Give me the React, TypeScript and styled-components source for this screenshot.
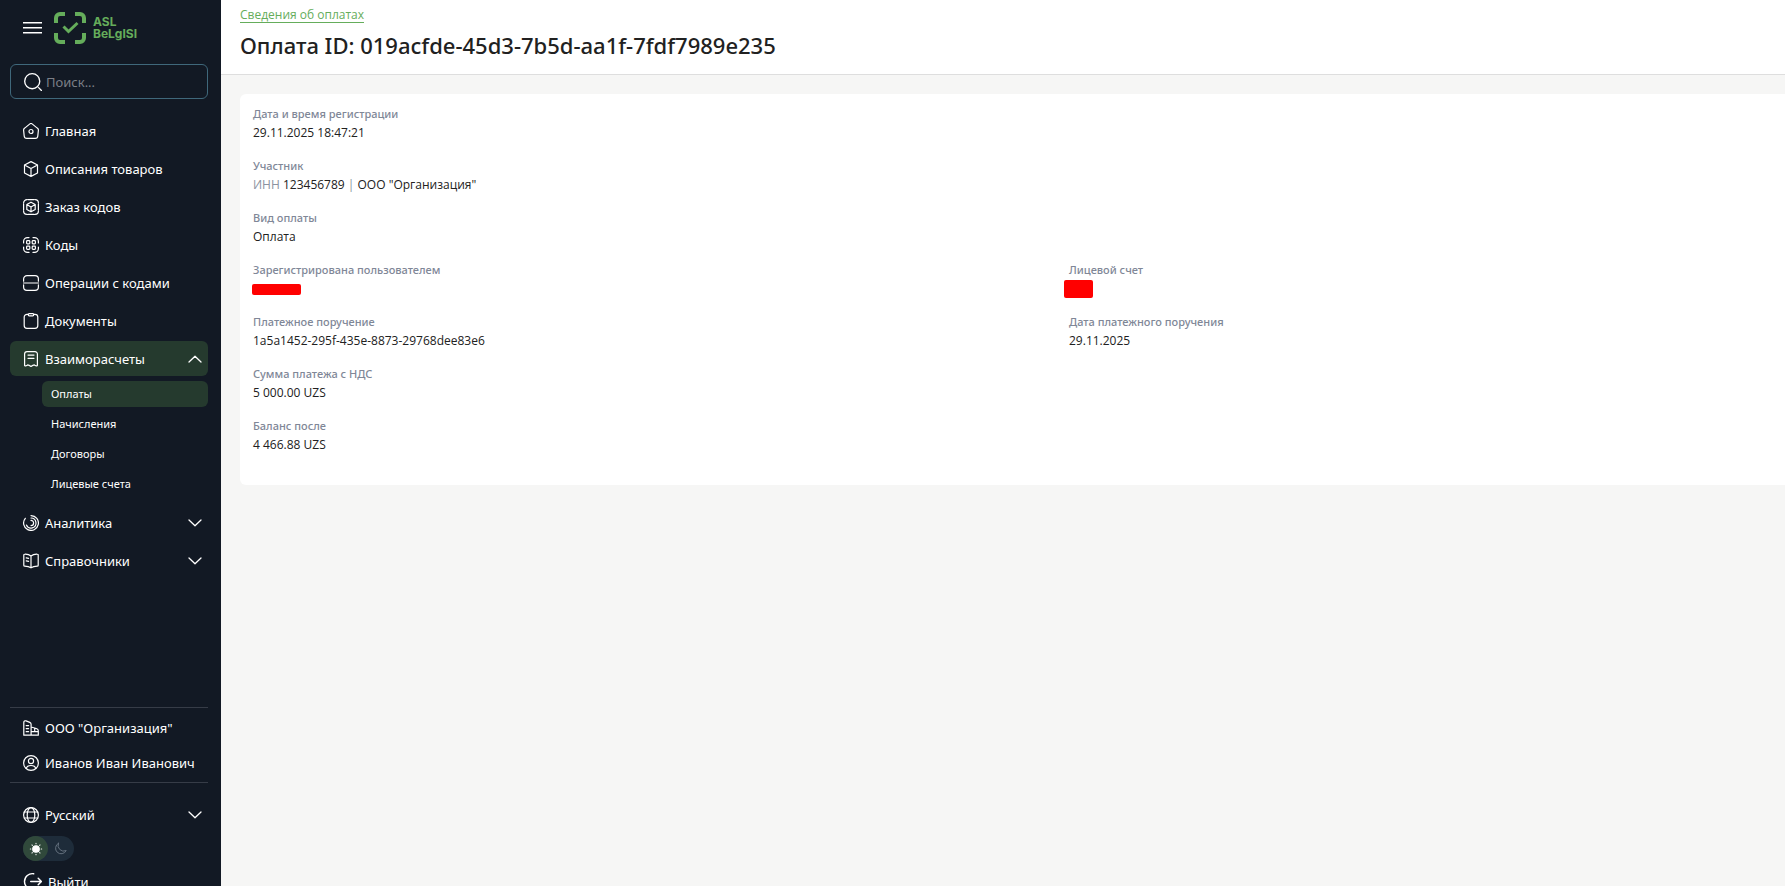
import React from "react";
import styled, { createGlobalStyle } from "styled-components";

const GlobalStyle = createGlobalStyle`
  * { box-sizing: border-box; }
  body {
    margin: 0;
    background: #f6f6f5;
    color: #212121;
    font-family: "Open Sans", "Noto Sans", sans-serif;
    font-size: 12px;
  }
  button, input { font: inherit; color: inherit; }
`;

const Page = styled.div`
  display: grid;
  grid-template-columns: 221px minmax(0, 1fr);
  min-height: 100vh;
`;

const Sidebar = styled.aside`
  position: sticky;
  top: 0;
  height: 100vh;
  overflow: hidden;
  display: flex;
  flex-direction: column;
  padding: 12px 13px 0 10px;
  background: #121924;
  color: #fff;
  font-family: "Noto Sans", "Open Sans", sans-serif;
  font-size: 13px;
`;

const Brand = styled.div`
  display: flex;
  align-items: center;
  gap: 12px;
  height: 32px;
  padding-left: 13px;
  flex-shrink: 0;
`;

const IconButton = styled.button`
  display: flex;
  padding: 0;
  border: 0;
  background: none;
  cursor: pointer;
`;

const Logo = styled.a`
  display: flex;
  align-items: center;
  gap: 7px;
  color: #65ad5b;
  text-decoration: none;
`;

const LogoText = styled.span`
  font: 700 12px/12px Inter, sans-serif;
`;

const LogoLine = styled.span`
  display: block;
`;

const SearchBox = styled.label`
  display: flex;
  align-items: center;
  gap: 4px;
  height: 35px;
  flex-shrink: 0;
  margin: 20px 0 14px;
  padding: 0 13px;
  border: 1px solid #3f687b;
  border-radius: 6px;
`;

const SearchInput = styled.input`
  flex: 1;
  min-width: 0;
  padding: 0;
  border: 0;
  outline: 0;
  background: none;
  &::placeholder { color: #7b7f87; opacity: 1; }
`;

const Nav = styled.nav`
  flex: 1 0 auto;
  display: flex;
  flex-direction: column;
  gap: 3px;
  padding-bottom: 129px;
`;

const Item = styled.button<{ $active?: boolean }>`
  display: flex;
  align-items: center;
  gap: 6px;
  width: 100%;
  height: 35px;
  flex-shrink: 0;
  padding: 0 6px 0 13px;
  border: 0;
  border-radius: 6px;
  background: ${(p) => (p.$active ? "#253a2e" : "none")};
  text-align: left;
  white-space: nowrap;
  cursor: pointer;
`;

const ItemText = styled.span`
  flex: 1;
`;

const SubMenu = styled.div`
  display: flex;
  flex-direction: column;
  gap: 4px;
  padding: 2px 0 5px 32px;
`;

const SubLink = styled.a<{ $active?: boolean }>`
  padding: 0 9px;
  border-radius: 6px;
  background: ${(p) => (p.$active ? "#253a2e" : "none")};
  color: inherit;
  font-size: 11px;
  line-height: 26px;
  text-decoration: none;
`;

const Account = styled.div`
  flex-shrink: 0;
  padding: 2px 0;
  border: solid #363c47;
  border-width: 1px 0;
`;

const Settings = styled.div`
  flex-shrink: 0;
  padding-top: 14px;
`;

const ThemeSwitch = styled.button`
  display: flex;
  align-items: center;
  width: 51px;
  height: 25px;
  margin: 4px 0 3px 13px;
  padding: 0;
  border: 0;
  border-radius: 13px;
  background: #1e2c3a;
  cursor: pointer;
`;

const ThemeOption = styled.span<{ $on?: boolean }>`
  display: grid;
  place-items: center;
  width: 25px;
  height: 25px;
  border-radius: 50%;
  background: ${(p) => (p.$on ? "#30493b" : "none")};
  color: ${(p) => (p.$on ? "#fff" : "#66727f")};
`;

const Main = styled.main`
  display: flex;
  flex-direction: column;
`;

const Header = styled.header`
  padding: 7px 19px 14px;
  border-bottom: 1px solid #dedede;
  background: #fff;
`;

const Crumb = styled.a`
  display: block;
  width: fit-content;
  border-bottom: 1px solid #65ad5b;
  color: #65ad5b;
  line-height: 15px;
  text-decoration: none;
`;

const Title = styled.h1`
  margin: 7px 0 0;
  font-family: "Noto Sans", "Open Sans", sans-serif;
  font-size: 22px;
  font-weight: 500;
  line-height: 30px;
`;

const Card = styled.section`
  margin: 19px 0 0 19px;
  padding: 11px 2px 30px 13px;
  border-radius: 6px 0 0 6px;
  background: #fff;
`;

const Fields = styled.dl`
  display: grid;
  grid-template-columns: 8fr 7fr;
  row-gap: 14px;
  margin: 0;
`;

const Field = styled.div<{ $wide?: boolean }>`
  grid-column: ${(p) => (p.$wide ? "1 / -1" : "auto")};
`;

const Label = styled.dt`
  color: #808797;
  font-family: "Noto Sans", "Open Sans", sans-serif;
  font-size: 11px;
  font-weight: 500;
  line-height: 18px;
`;

const Value = styled.dd`
  margin: 0;
  height: 20px;
  line-height: 20px;
`;

const Muted = styled.span`
  color: #8b92a0;
`;

const Redaction = styled.span<{ $tall?: boolean }>`
  display: block;
  width: ${(p) => (p.$tall ? 29 : 49)}px;
  height: ${(p) => (p.$tall ? 18 : 11)}px;
  margin-left: ${(p) => (p.$tall ? -5 : -1)}px;
  border-radius: 2px;
  background: #f00;
`;

const RedactedValue = styled(Value)`
  display: flex;
  align-items: center;
`;

function Icon({ children, size = 16, width = 1.2 }: { children: React.ReactNode; size?: number; width?: number }) {
  return (
    <svg width={size} height={size} viewBox="0 0 16 16" fill="none" stroke="currentColor" strokeWidth={width} strokeLinecap="round" strokeLinejoin="round" aria-hidden="true">
      {children}
    </svg>
  );
}

const Chevron = ({ up }: { up?: boolean }) => (
  <svg width="14" height="8" viewBox="0 0 14 8" fill="none" stroke="currentColor" strokeWidth="1.3" strokeLinecap="round" strokeLinejoin="round" aria-hidden="true">
    <path d={up ? "M1 7 7 1.2 13 7" : "M1 1 7 6.8 13 1"} />
  </svg>
);

const home = <><path d="M6.9.9a1.8 1.8 0 0 1 2.2 0l5.2 4.2c.8.6 1.2 1.3 1.1 2.2l-.6 5.700a2.600 2.600 0 0 1-2.600 2.400H3.800a2.600 2.600 0 0 1-2.600-2.400L.6 7.300c-.1-.9.3-1.600 1.100-2.200z" /><circle cx="8" cy="8.500" r="2" /></>;
const box = <path d="M8 .6 14.500 4v8L8 15.400 1.500 12V4zM1.500 4 8 7.600 14.500 4M8 7.600v7.800" />;
const order = <><path d="M5 .6h6M5 15.400h6M.6 5v6M15.400 5v6M.6 4A3.400 3.400 0 0 1 4 .6M12 .6A3.400 3.400 0 0 1 15.400 4M.6 12A3.400 3.400 0 0 0 4 15.400M12 15.400a3.400 3.400 0 0 0 3.400-3.400" /><path d="m8 3.200 4.200 2.400v4.800L8 12.800l-4.200-2.400V5.600zM3.800 5.600 8 8l4.200-2.400M8 8v4.800" /></>;
const codes = <><rect x="3.600" y="3.600" width="3.200" height="3.200" rx=".8" /><rect x="9.200" y="3.600" width="3.200" height="3.200" rx=".8" /><rect x="3.600" y="9.200" width="3.200" height="3.200" rx=".8" /><rect x="9.200" y="9.200" width="3.200" height="3.200" rx=".8" /><path d="M.6 6V4.500A3.900 3.900 0 0 1 4.500.6H6M10 .6h1.500a3.900 3.900 0 0 1 3.900 3.900V6M.6 10v1.500a3.900 3.900 0 0 0 3.900 3.900H6M10 15.400h1.500a3.900 3.900 0 0 0 3.900-3.900V10" /></>;
const operations = <><path d="M.6 6.200V4A3.400 3.400 0 0 1 4 .6h8A3.400 3.400 0 0 1 15.400 4v2.200M.6 9.800V12A3.400 3.400 0 0 0 4 15.400h8a3.400 3.400 0 0 0 3.400-3.400V9.800" /><path d="M.4 8h15.200" /></>;
const documents = <><path d="M5.200 1.300H4A2.800 2.800 0 0 0 1.200 4.100v8.500A2.800 2.800 0 0 0 4 15.400h8a2.800 2.800 0 0 0 2.800-2.800V4.100A2.800 2.800 0 0 0 12 1.300h-1.200" /><path d="M5.200 1.600c0-.6.400-1 1-1h3.600c.6 0 1 .4 1 1s-.4 1.300-1 1.300H6.200c-.6 0-1-.7-1-1.300z" /></>;
const receipt = <><path d="M1.600 14.600V3A2.400 2.400 0 0 1 4 .6h8A2.400 2.400 0 0 1 14.400 3v11.600c-1.600.5-2.400.1-3.100-.7-1.100.1-1.900.500-3.300 1.500-1.400-1-2.200-1.400-3.300-1.500-.7.800-1.500 1.200-3.100.7z" /><path d="M5 4.100h6M5 7.300h6" /></>;
const analytics = <><path d="M8 .6A7.400 7.400 0 1 1 2.300 3.300" /><path d="M8 3a5 5 0 1 1-4.600 7" /><path d="M8 5.400a2.600 2.600 0 0 1 0 5.200" /></>;
const book = <><path d="M8 3C6.400 1.600 3.600 1 1.700 1.100 1.100 1.100.8 1.500.8 2v10.200c0 .6.400 1 .9 1 2.300 0 4.500.4 6.300 1.600 1.800-1.200 4-1.600 6.300-1.600.5 0 .9-.4.9-1V2c0-.5-.3-.9-.9-.9C12.400 1 9.600 1.600 8 3zM8 3v11.800M3.200 4.800l2.400.5M3.200 7.800l2.400.5" /></>;
const company = <><path d="M.8 15.200V2.600C.8 1 1.800.5 3 .9l3.800 1.500c.9.400 1.300.9 1.300 1.900v10.900zM8.100 7l5.200 1.500c1.400.5 2 1 2 2.200v4.500H8.100M3.200 5.600h2.400M3.200 8.600h2.400M3.200 11.700h2.400M8.200 11.700h7M11.700 8.500v3" /></>;
const user = <><circle cx="8" cy="8" r="7.400" /><circle cx="8" cy="6" r="2.600" /><path d="M3.300 13.500c.4-2.200 2.200-3 4.700-3s4.300.8 4.700 3" /></>;
const globe = <><circle cx="8" cy="8" r="7.400" /><ellipse cx="8" cy="8" rx="3.800" ry="7.400" /><path d="M1.300 5h13.400M1.300 11h13.400" /></>;

const mainItems = [
  { text: "Главная", icon: home },
  { text: "Описания товаров", icon: box },
  { text: "Заказ кодов", icon: order },
  { text: "Коды", icon: codes },
  { text: "Операции с кодами", icon: operations },
  { text: "Документы", icon: documents },
];

const NavItem = ({ text, icon, chevron, active }: { text: string; icon: React.ReactNode; chevron?: "up" | "down"; active?: boolean }) => (
  <Item type="button" $active={active}>
    <Icon>{icon}</Icon>
    <ItemText>{text}</ItemText>
    {chevron && <Chevron up={chevron === "up"} />}
  </Item>
);

const TextField = ({ label, wide, children }: { label: string; wide?: boolean; children: React.ReactNode }) => (
  <Field $wide={wide}>
    <Label>{label}</Label>
    <Value>{children}</Value>
  </Field>
);

export default function App() {
  return (
    <>
      <GlobalStyle />
      <Page>
        <Sidebar>
          <Brand>
            <IconButton type="button" aria-label="Меню">
              <svg width="19" height="12" viewBox="0 0 19 12" fill="#fff" aria-hidden="true">
                <path d="M0 0h19v1.500H0zM0 5h19v1.500H0zM0 10h19v1.500H0z" />
              </svg>
            </IconButton>
            <Logo href="#">
              <svg width="32" height="32" viewBox="0 0 32 32" fill="none" stroke="currentColor" strokeWidth="4" aria-hidden="true">
                <path d="M11 2H6a4 4 0 0 0-4 4v5M21 2h5a4 4 0 0 1 4 4v5M11 30H6a4 4 0 0 1-4-4v-5M21 30h5a4 4 0 0 0 4-4v-5" />
                <path d="m9.500 14.500 5 5 9-8.500" strokeWidth="3" />
              </svg>
              <LogoText>
                <LogoLine>ASL</LogoLine>
                <LogoLine>BeLgISI</LogoLine>
              </LogoText>
            </Logo>
          </Brand>
          <SearchBox>
            <Icon size={18}>
              <circle cx="7.300" cy="7.300" r="6.700" />
              <path d="m13 13 2.500 2.500" />
            </Icon>
            <SearchInput type="search" placeholder="Поиск..." aria-label="Поиск" />
          </SearchBox>
          <Nav>
            {mainItems.map((item) => (
              <NavItem key={item.text} {...item} />
            ))}
            <NavItem text="Взаиморасчеты" icon={receipt} chevron="up" active />
            <SubMenu>
              <SubLink href="#" $active>Оплаты</SubLink>
              <SubLink href="#">Начисления</SubLink>
              <SubLink href="#">Договоры</SubLink>
              <SubLink href="#">Лицевые счета</SubLink>
            </SubMenu>
            <NavItem text="Аналитика" icon={analytics} chevron="down" />
            <NavItem text="Справочники" icon={book} chevron="down" />
          </Nav>
          <Account>
            <NavItem text={'ООО "Организация"'} icon={company} />
            <NavItem text="Иванов Иван Иванович" icon={user} />
          </Account>
          <Settings>
            <NavItem text="Русский" icon={globe} chevron="down" />
            <ThemeSwitch type="button" aria-label="Тема оформления">
              <ThemeOption $on>
                <Icon size={14}>
                  <circle cx="8" cy="8" r="3.800" fill="currentColor" />
                  <path d="M8 1.500v.6M8 13.900v.6M1.500 8h.6M13.900 8h.6M3.400 3.400l.4.4M12.200 12.200l.4.4M3.400 12.600l.4-.4M12.200 3.800l.4-.4" />
                </Icon>
              </ThemeOption>
              <ThemeOption>
                <Icon size={13}>
                  <path d="M5.500 1.500A6.900 6.900 0 1 0 15 10.500 7 7 0 0 1 5.500 1.500z" />
                </Icon>
              </ThemeOption>
            </ThemeSwitch>
            <Item type="button">
              <Icon size={19}>
                <path d="M9 1.500a6.600 6.600 0 1 0 0 13M6.500 8h9M12.800 5.300 15.500 8l-2.700 2.700" />
              </Icon>
              <ItemText>Выйти</ItemText>
            </Item>
          </Settings>
        </Sidebar>
        <Main>
          <Header>
            <Crumb href="#">Сведения об оплатах</Crumb>
            <Title>Оплата ID: 019acfde-45d3-7b5d-aa1f-7fdf7989e235</Title>
          </Header>
          <Card>
            <Fields>
              <TextField label="Дата и время регистрации" wide>29.11.2025 18:47:21</TextField>
              <TextField label="Участник" wide>
                <Muted>ИНН</Muted> 123456789 <Muted>|</Muted> ООО "Организация"
              </TextField>
              <TextField label="Вид оплаты" wide>Оплата</TextField>
              <Field>
                <Label>Зарегистрирована пользователем</Label>
                <RedactedValue><Redaction /></RedactedValue>
              </Field>
              <Field>
                <Label>Лицевой счет</Label>
                <RedactedValue><Redaction $tall /></RedactedValue>
              </Field>
              <TextField label="Платежное поручение">1a5a1452-295f-435e-8873-29768dee83e6</TextField>
              <TextField label="Дата платежного поручения">29.11.2025</TextField>
              <TextField label="Сумма платежа с НДС" wide>5 000.00 UZS</TextField>
              <TextField label="Баланс после" wide>4 466.88 UZS</TextField>
            </Fields>
          </Card>
        </Main>
      </Page>
    </>
  );
}
